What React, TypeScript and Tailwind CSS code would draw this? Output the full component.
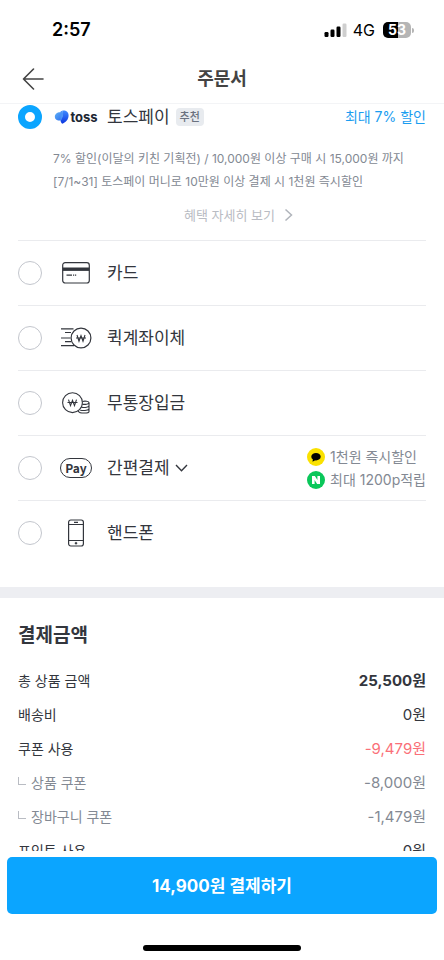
import { useState } from 'react';
import type { ReactNode } from 'react';

const INK = '#33363d';

function StatusBar() {
  return (
    <div className="flex h-[60px] shrink-0 items-center justify-between pl-[52px] pr-[30px] text-black">
      <span className="text-lg font-semibold">2:57</span>
      <div className="flex items-center">
        <svg width="23" height="16" viewBox="0 0 23 16" className="mr-[6px]" aria-hidden="true">
          <rect x="0.5" y="10" width="4" height="5" rx="1.2" />
          <rect x="6.5" y="7.5" width="4" height="7.5" rx="1.2" />
          <rect x="12.5" y="4.5" width="4" height="10.5" rx="1.2" />
          <rect x="18.5" y="1.5" width="4" height="13.5" rx="1.2" fill="#cfcfcf" />
        </svg>
        <span className="mr-2 text-base">4G</span>
        <div className="flex items-center gap-px">
          <span className="flex h-4 w-7 items-center justify-center rounded-[5px] bg-linear-to-r from-black from-53% to-[#b5b5b5] to-53% text-sm font-bold text-white">
            53
          </span>
          <span className="h-[5px] w-[2px] rounded-r-full bg-[#b5b5b5]" />
        </div>
      </div>
    </div>
  );
}

function TossLogo() {
  return (
    <span className="flex items-center gap-px">
      <svg width="15" height="14" viewBox="0 0 15 14" className="shrink-0" aria-hidden="true">
        <defs>
          <linearGradient id="toss-left" x1="0" y1="0" x2="1" y2="1">
            <stop offset="0" stopColor="#5fb0f5" />
            <stop offset="1" stopColor="#2a6cf0" />
          </linearGradient>
          <linearGradient id="toss-right" x1="0" y1="0" x2="0" y2="1">
            <stop offset="0" stopColor="#3f8bff" />
            <stop offset="1" stopColor="#0b35e0" />
          </linearGradient>
        </defs>
        <path d="M7 2.4C3.5 2 .8 4 .8 6.7c0 2.6 2.4 4 5.8 3.9L9 7.5z" fill="url(#toss-left)" />
        <path d="M8.3.7c3.5-.6 6.3 1.4 6.3 4.6 0 4.6-3.2 7.4-6.4 8.4-1-1-1.6-2-1.6-3.3C8.500 8 9.200 5.400 8.300.7z" fill="url(#toss-right)" />
        <path d="M6.300 2.400C6.400 1.500 7.200.9 8.300.7c1.400 3 .9 6.600-1.700 9.800z" fill="#4b93f8" />
      </svg>
      <span className="text-[13px] leading-4 font-bold text-[#202632]">toss</span>
    </span>
  );
}

function CardIcon() {
  return (
    <svg width="28" height="22" viewBox="0 0 28 22" fill="none" stroke={INK} aria-hidden="true">
      <rect x="0.7" y="0.7" width="26.6" height="20.3" rx="2.5" strokeWidth="1.2" />
      <path d="M0.7 7.2h26.6" strokeWidth="3.4" />
      <path d="M4.500 13.200h5.500M11 13.200h1.200M13 13.200h1.200" strokeWidth="1.2" />
    </svg>
  );
}

function TransferIcon() {
  return (
    <svg width="32" height="22" viewBox="0 0 32 22" fill="none" stroke={INK} strokeWidth="1.2" aria-hidden="true">
      <circle cx="21" cy="11" r="9.9" />
      <path d="M1 1.800h12.500M5 5.500h6M1 11h9.500M5 14.700h6M1 18.700h13" />
      <path d="M17 8l2 6.200 2-5.600 2 5.600L25 8M16 11h10" strokeWidth="1.1" />
    </svg>
  );
}

function DepositIcon() {
  return (
    <svg width="28" height="22" viewBox="0 0 28 22" fill="none" stroke={INK} strokeWidth="1.1" aria-hidden="true">
      <circle cx="10.500" cy="10.700" r="9.900" />
      <path d="M6.500 7.700l2 6 2-5.400 2 5.400 2-6M5.500 10.500h10" />
      <path d="M20.500 9.500c2-.7 6.500-.4 6.500 1.200s-4 2-6.800 1.500" />
      <path d="M27 10.700v3c0 1.600-4 2.200-7.500 1.600M27 13.700v3c0 1.600-4.500 2.200-8.800 1.500M27 16.700v2.700c0 2.200-9.500 2.200-10.500 0v-.9" />
    </svg>
  );
}

function PayIcon() {
  return (
    <span className="flex h-5 w-8 items-center justify-center rounded-full border border-[#33363d] font-['Noto_Sans_CJK_KR',sans-serif] text-xs leading-3 font-bold text-[#33363d]">
      Pay
    </span>
  );
}

function PhoneIcon() {
  return (
    <svg width="18" height="28" viewBox="0 0 18 28" fill="none" stroke={INK} strokeWidth="1.2" aria-hidden="true">
      <rect x="1.6" y="1" width="14.8" height="26" rx="2.2" />
      <path d="M1.600 5.500h14.800M1.600 21.500h14.800M7 3.300h4" />
      <circle cx="9" cy="24.2" r="1" fill={INK} strokeWidth="0.5" />
    </svg>
  );
}

function EasyPayBenefits() {
  return (
    <div className="flex flex-col gap-[3px] text-sm leading-5 text-[#838993]">
      <span className="flex items-center gap-[5px]">
        <svg width="18" height="18" viewBox="0 0 18 18" aria-hidden="true">
          <circle cx="9" cy="9" r="9" fill="#fae100" />
          <ellipse cx="9" cy="8.7" rx="4.7" ry="3.7" />
          <path d="M6 10.500l-.5 3.200 3.500-2z" />
        </svg>
        1천원 즉시할인
      </span>
      <span className="flex items-center gap-[5px]">
        <svg width="18" height="18" viewBox="0 0 18 18" aria-hidden="true">
          <circle cx="9" cy="9" r="9" fill="#0ac75a" />
          <path d="M5 5h2.900l2.500 3.900V5H13v8h-2.900L7.600 9.100V13H5z" fill="#fff" />
        </svg>
        최대 1200p적립
      </span>
    </div>
  );
}

type OptionProps = {
  id: string;
  label: string;
  icon: ReactNode;
  selected: string;
  onSelect: (id: string) => void;
  extra?: ReactNode;
  right?: ReactNode;
};

function PayOption({ id, label, icon, selected, onSelect, extra, right }: OptionProps) {
  return (
    <div className="flex w-full items-center justify-between">
      <label className="flex items-center">
        <input
          type="radio"
          name="payment"
          value={id}
          checked={selected === id}
          onChange={() => onSelect(id)}
          className="size-6 shrink-0 appearance-none rounded-full border border-[#c3c6cd] bg-white checked:border-[7px] checked:border-[#0ba5ff]"
        />
        <span className="mr-[7px] ml-[10px] flex w-12 shrink-0 justify-center">{icon}</span>
        <span className="text-[17px] leading-6 whitespace-nowrap">{label}</span>
        {extra}
      </label>
      {right}
    </div>
  );
}

const amounts = [
  { label: '총 상품 금액', value: '25,500원', valueClass: 'text-[15px] font-bold' },
  { label: '배송비', value: '0원', valueClass: 'text-[15px]' },
  { label: '쿠폰 사용', value: '-9,479원', valueClass: 'text-[15px] text-[#fa6f78]' },
  { label: '상품 쿠폰', value: '-8,000원', valueClass: 'text-[15px]', sub: true },
  { label: '장바구니 쿠폰', value: '-1,479원', valueClass: 'text-[15px]', sub: true },
  { label: '포인트 사용', value: '0원', valueClass: 'text-[15px]' },
];

export default function App() {
  const [selected, setSelected] = useState('toss');

  const options = [
    { id: 'card', label: '카드', icon: <CardIcon /> },
    { id: 'transfer', label: '퀵계좌이체', icon: <TransferIcon /> },
    { id: 'deposit', label: '무통장입금', icon: <DepositIcon /> },
    {
      id: 'easy',
      label: '간편결제',
      icon: <PayIcon />,
      extra: (
        <svg width="13" height="8" viewBox="0 0 13 8" fill="none" stroke={INK} strokeWidth="1.4" className="ml-[5px]" aria-hidden="true">
          <path d="M1 1l5.500 5.700L12 1" />
        </svg>
      ),
      right: <EasyPayBenefits />,
    },
    { id: 'phone', label: '핸드폰', icon: <PhoneIcon /> },
  ];

  return (
    <div className="flex h-screen flex-col bg-white font-['Inter','Noto_Sans_CJK_KR',sans-serif] text-[#33363d]">
      <StatusBar />
      <header className="grid h-11 shrink-0 grid-cols-[1fr_auto_1fr] items-center border-b border-[#f3f4f6] px-[22px] pb-[6px]">
        <button type="button" aria-label="뒤로" className="w-6">
          <svg width="22" height="22" viewBox="0 0 22 22" fill="none" stroke="#444" strokeWidth="1.6" strokeLinecap="round" strokeLinejoin="round" aria-hidden="true">
            <path d="M11.500 1L1.500 11l10 10M1.500 11H21" />
          </svg>
        </button>
        <h1 className="text-lg leading-6 font-bold text-[#444]">주문서</h1>
      </header>

      <main className="min-h-0 flex-1 overflow-y-auto [scrollbar-width:none]">
        <section className="px-[18px] pb-[22px]">
          <div className="border-b border-[#eaebee] pt-px pb-[15px]">
            <PayOption
              id="toss"
              label="토스페이"
              icon={<TossLogo />}
              selected={selected}
              onSelect={setSelected}
              extra={
                <span className="ml-[6px] rounded-sm bg-[#e8ebef] px-1 text-[11px] leading-[18px] font-medium text-[#6b7280]">
                  추천
                </span>
              }
              right={<span className="text-sm leading-5 text-[#1a9df0]">최대 7% 할인</span>}
            />
            <p className="mt-[18px] pl-[35px] text-xs leading-[23px] whitespace-nowrap text-[#838993]">
              7% 할인(이달의 키친 기획전) / 10,000원 이상 구매 시 15,000원 까지
              <br />
              [7/1~31] 토스페이 머니로 10만원 이상 결제 시 1천원 즉시할인
            </p>
            <button type="button" className="mx-auto mt-3 flex items-center gap-[9px] pl-[33px] text-[13px] leading-5 text-[#b9bcc3]">
              혜택 자세히 보기
              <svg width="9" height="14" viewBox="0 0 9 14" fill="none" stroke="#b0b4bb" strokeWidth="1.5" aria-hidden="true">
                <path d="M1.500 1.500L7.500 7l-6 5.500" />
              </svg>
            </button>
          </div>
          {options.map((option) => (
            <div key={option.id} className="flex h-[65px] items-center border-b border-[#eaebee] last:h-16 last:border-b-0">
              <PayOption {...option} selected={selected} onSelect={setSelected} />
            </div>
          ))}
        </section>

        <section className="border-t-[11px] border-[#edeef2] px-[18px] pt-[26px] pb-6">
          <h2 className="text-[19px] leading-6 font-bold">결제금액</h2>
          <dl className="mt-4 text-sm leading-[34px]">
            {amounts.map((row) => (
              <div key={row.label} className={row.sub ? 'flex h-[34px] justify-between text-[#838993]' : 'flex h-[34px] justify-between'}>
                <dt className="flex items-center">
                  {row.sub && (
                    <span className="mr-[5px] mb-1 size-2 border-b border-l border-[#b9bcc3]" />
                  )}
                  {row.label}
                </dt>
                <dd className={row.valueClass}>{row.value}</dd>
              </div>
            ))}
          </dl>
        </section>
      </main>

      <footer className="shrink-0 px-[7px] pt-[6px] pb-[9px]">
        <button type="button" className="h-[57px] w-full rounded-[5px] bg-[#0ba5ff] text-[17px] leading-6 font-bold text-white">
          14,900원 결제하기
        </button>
        <div className="mx-auto mt-[31px] h-[6px] w-[158px] rounded-full bg-black" />
      </footer>
    </div>
  );
}
